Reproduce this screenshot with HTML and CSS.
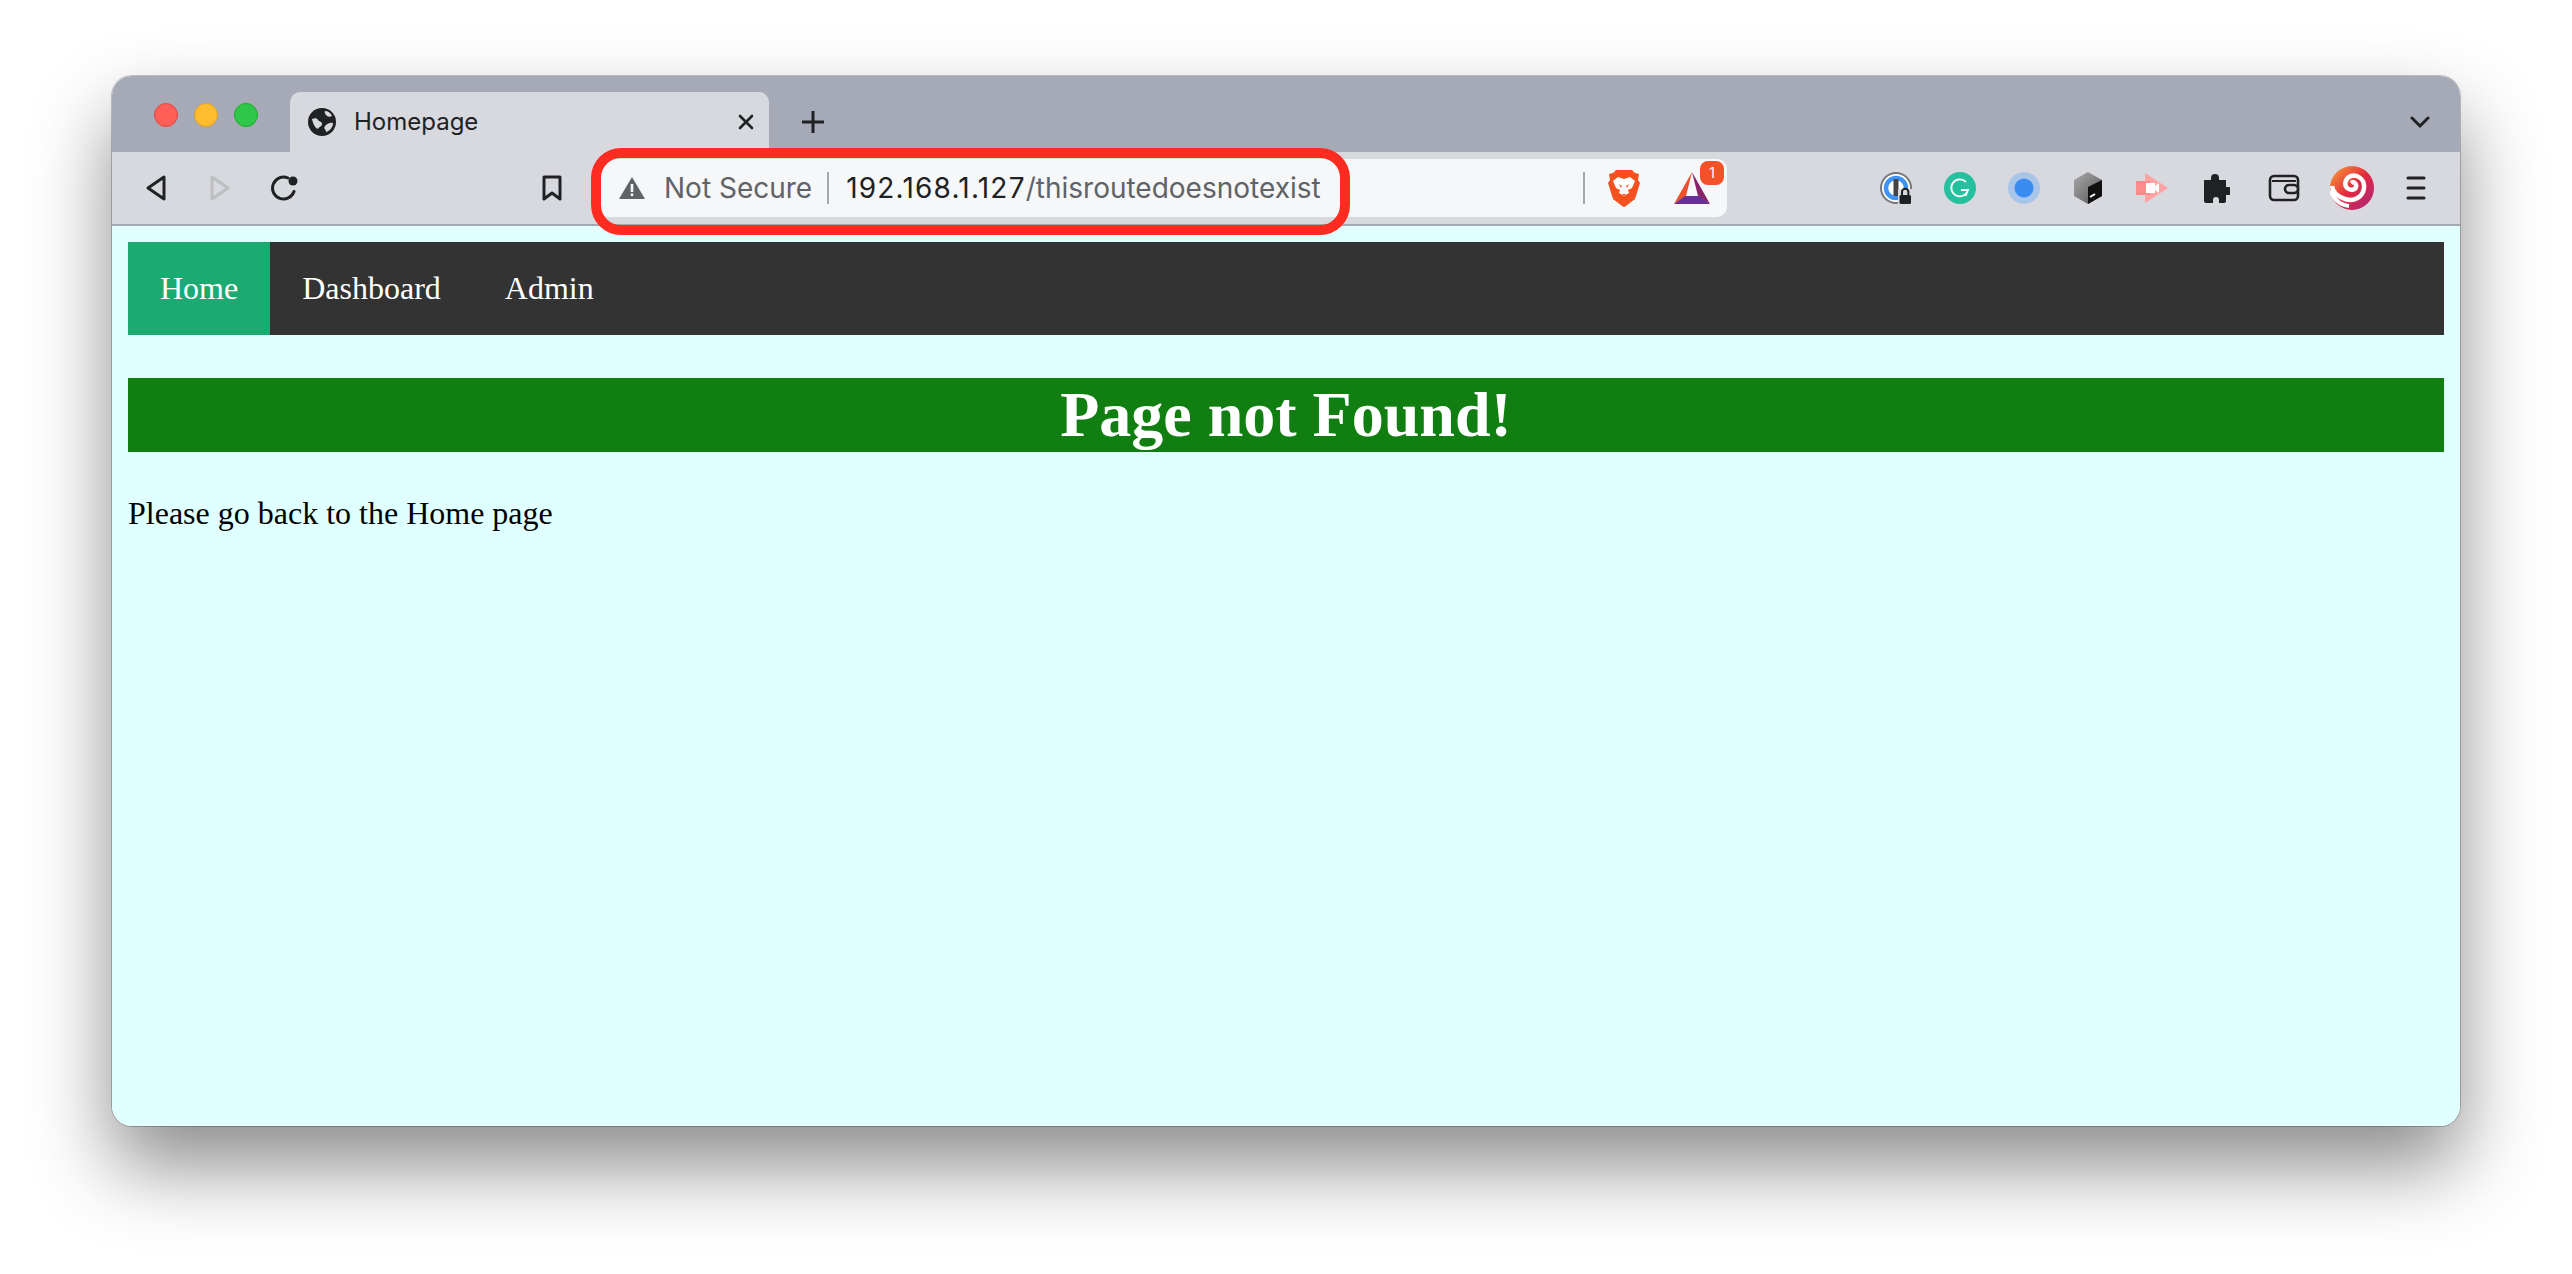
FILE: index.html
```html
<!DOCTYPE html>
<html lang="en">
<head>
    <meta charset="UTF-8">
    <title>Homepage</title>
    <link rel="stylesheet" href="styles.css">
</head>
<body>
    <div class="window">
        <!-- tab strip -->
        <div class="tabstrip">
            <div class="lights">
                <span class="light red"></span>
                <span class="light yellow"></span>
                <span class="light green"></span>
            </div>
            <div class="tab">
                <svg class="favicon" viewBox="0 0 28 28">
                    <circle cx="14" cy="14" r="14" fill="#202124"/>
                    <path d="M4 11c3-1 5-1 6 1s4 1 4 4-3 2-4 5c-3-1-5-5-6-10zM17 3c3 0 6 2 7 5-2 1-4 1-5 0s-3-3-2-5zM25 15c0 4-3 8-7 9 0-3-3-3-1-6 2-2 5-4 8-3z" fill="#d8d9df"/>
                </svg>
                <span class="tab-title">Homepage</span>
                <svg class="tab-close" viewBox="0 0 18 18">
                    <path d="M3 3l12 12M15 3L3 15" stroke="#202124" stroke-width="2.6" stroke-linecap="round"/>
                </svg>
            </div>
            <svg class="new-tab" viewBox="0 0 26 26">
                <path d="M13 2v22M2 13h22" stroke="#202124" stroke-width="3"/>
            </svg>
            <svg class="tab-menu" viewBox="0 0 20 14">
                <path d="M2 3l8 8 8-8" fill="none" stroke="#202124" stroke-width="3" stroke-linecap="round"/>
            </svg>
        </div>

        <!-- toolbar -->
        <div class="toolbar">
            <span class="tool first">
                <svg width="22" height="28" viewBox="0 0 22 28"><path d="M19 3L3 14l16 11z" fill="none" stroke="#202124" stroke-width="3" stroke-linejoin="round"/></svg>
            </span>
            <span class="tool">
                <svg width="22" height="28" viewBox="0 0 22 28"><path d="M3 3l16 11L3 25z" fill="none" stroke="#bdbec2" stroke-width="3" stroke-linejoin="round"/></svg>
            </span>
            <span class="tool">
                <svg width="28" height="28" viewBox="0 0 28 28"><path d="M24 17.500A11 11 0 1 1 18 4" fill="none" stroke="#202124" stroke-width="3" stroke-linecap="round"/><circle cx="23" cy="7" r="4.500" fill="#202124"/></svg>
            </span>
            <span class="tool bookmark">
                <svg width="22" height="28" viewBox="0 0 22 28"><path d="M3 3h16v22l-8-6-8 6z" fill="none" stroke="#202124" stroke-width="3" stroke-linejoin="round"/></svg>
            </span>

            <div class="address">
                <svg class="warn" viewBox="0 0 26 22">
                    <path d="M13 0l13 22H0z" fill="#5f6368"/>
                    <path d="M11.700 7h2.600v8h-2.600zM11.700 16.500h2.600v2.600h-2.600z" fill="#f6f7f9"/>
                </svg>
                <span class="not-secure">Not Secure</span>
                <span class="addr-sep"></span>
                <span class="url"><span class="host">192.168.1.127</span>/thisroutedoesnotexist</span>
                <span class="addr-sep end"></span>
                <svg class="brave" viewBox="0 0 34 38">
                    <path d="M9 1h16l3 3 4 1-1 6 2 3-5 16-9 7-2 1-2-1-9-7L1 14l2-3-1-6 4-1z" fill="#f6501f"/>
                    <path d="M11 8l6 2 6-2 5 4-3 7-4 2 1 3-5 3-5-3 1-3-4-2-3-7z" fill="#fff"/>
                    <path d="M12 15l3 2-1 2zM22 15l-3 2 1 2zM15 25h4l-2 2z" fill="#f6501f"/>
                </svg>
                <span class="bat">
                    <svg width="36" height="32" viewBox="0 0 36 32">
                        <path d="M18 0l18 32-12-8z" fill="#8a2368"/>
                        <path d="M18 0L0 32l12-8z" fill="#f0502a"/>
                        <path d="M0 32h36l-11-8H11z" fill="#66309a"/>
                    </svg>
                    <span class="badge">1</span>
                </span>
            </div>

            <span class="tool ext-first">
                <svg width="32" height="32" viewBox="0 0 32 32">
                    <circle cx="16" cy="16" r="15" fill="#fff" stroke="#777" stroke-width="2"/>
                    <circle cx="16" cy="16" r="10" fill="none" stroke="#3d94f6" stroke-width="4.500"/>
                    <rect x="13.500" y="7" width="5" height="17" fill="#444"/>
                    <rect x="18" y="17" width="14" height="15" fill="#d8d9df"/>
                    <path d="M22 23v-3a3.200 3.200 0 0 1 6.400 0v3" fill="none" stroke="#202124" stroke-width="2"/>
                    <rect x="19.500" y="23" width="11.500" height="9" rx="1.500" fill="#202124"/>
                </svg>
            </span>
            <span class="tool">
                <svg width="32" height="32" viewBox="0 0 32 32">
                    <circle cx="16" cy="16" r="16" fill="#25c19f"/>
                    <path d="M22 10a8.500 8.500 0 1 0 2 8h-7M24 18l-2.500 6" fill="none" stroke="#fff" stroke-width="1.800"/>
                </svg>
            </span>
            <span class="tool">
                <svg width="32" height="32" viewBox="0 0 32 32">
                    <circle cx="16" cy="16" r="16" fill="#a9c5ea"/>
                    <circle cx="16" cy="16" r="9.500" fill="#3a8cf0"/>
                </svg>
            </span>
            <span class="tool">
                <svg width="28" height="32" viewBox="0 0 28 32">
                    <defs><linearGradient id="boxGrey" x1="0" y1="0" x2="1" y2="1"><stop offset="0" stop-color="#aaa"/><stop offset="1" stop-color="#555"/></linearGradient></defs>
                    <path d="M14 0l14 8v16l-14 8-14-8V8z" fill="url(#boxGrey)"/>
                    <path d="M28 8v16l-14 8V15z" fill="#111"/>
                    <path d="M16 25l5-3" stroke="#fff" stroke-width="2"/>
                </svg>
            </span>
            <span class="tool">
                <svg width="32" height="30" viewBox="0 0 32 30">
                    <path d="M9 0l23 15L9 30z" fill="#fda3a3"/>
                    <rect x="0" y="8" width="14" height="14" fill="#fe8b8b"/>
                    <path d="M10 10h9v3l4-3v10l-4-3v3h-9z" fill="#fff"/>
                </svg>
            </span>
            <span class="tool">
                <svg width="28" height="30" viewBox="0 0 28 30">
                    <path d="M2 7h7V5a4 4 0 0 1 8 0v2h7v7h2a4 4 0 0 1 0 8h-2v6a2 2 0 0 1-2 2h-5v-3a3 3 0 0 0-6 0v3H4a2 2 0 0 1-2-2z" fill="#202124"/>
                </svg>
            </span>
            <span class="tool wallet">
                <svg width="32" height="28" viewBox="0 0 32 28">
                    <rect x="2" y="2" width="28" height="24" rx="4" fill="none" stroke="#202124" stroke-width="2.600"/>
                    <path d="M4 7h24" stroke="#202124" stroke-width="2"/>
                    <rect x="17" y="11" width="13" height="8" rx="4" fill="#d8d9df" stroke="#202124" stroke-width="2.600"/>
                </svg>
            </span>
            <span class="tool spiral">
                <svg width="44" height="44" viewBox="0 0 44 44">
                    <defs><linearGradient id="swirl" x1="0" y1="0" x2="1" y2="1"><stop offset="0" stop-color="#f9a535"/><stop offset=".5" stop-color="#e5293f"/><stop offset="1" stop-color="#a6257f"/></linearGradient></defs>
                    <circle cx="22" cy="22" r="22" fill="url(#swirl)"/>
                    <path d="M21 17c3-2 6 1 5 4s-6 4-9 1-2-10 4-12 14 3 13 12-10 14-19 11S3 26 2 20" fill="none" stroke="#fff" stroke-width="4.500"/>
                    <path d="M1 24c2 9 9 15 18 16" fill="none" stroke="#fff" stroke-width="4"/>
                </svg>
            </span>
            <span class="tool">
                <svg width="20" height="26" viewBox="0 0 20 26">
                    <path d="M2 3h16M2 13h16M2 23h16" stroke="#202124" stroke-width="3" stroke-linecap="round"/>
                </svg>
            </span>

            <!-- red annotation drawn over the address bar -->
            <div class="callout"></div>
        </div>

        <!-- page -->
        <div class="page">
            <div class="topnav">
                <a class="active" href="#">Home</a>
                <a href="#">Dashboard</a>
                <a href="#">Admin</a>
            </div>
            <h1>Page not Found!</h1>
            <p>Please go back to the Home page</p>
        </div>
    </div>
</body>
</html>
```

FILE: styles.css
```css
html, body {
    margin: 0;
    height: 100%;
    background-color: #fff;
    overflow: hidden;
}
body {
    padding: 76px 112px 0;
    box-sizing: border-box;
}
.window {
    position: relative;
    width: 2348px;
    height: 1050px;
    display: flex;
    flex-direction: column;
    border-radius: 20px;
    overflow: hidden;
    box-shadow: 0 0 0 1px rgba(0, 0, 0, 0.22), 0 40px 80px 0 rgba(0, 0, 0, 0.46);
}
.tabstrip {
    height: 76px;
    flex: none;
    display: flex;
    align-items: flex-end;
    background-color: #a6aab6;
    box-sizing: border-box;
}
.lights {
    align-self: flex-start;
    display: flex;
    gap: 16px;
    margin: 27px 0 0 42px;
}
.light {
    width: 24px;
    height: 24px;
    border-radius: 50%;
    box-sizing: border-box;
}
.red {
    background-color: #ff5f57;
    border: 1px solid #e0443e;
}
.yellow {
    background-color: #febc2e;
    border: 1px solid #dea123;
}
.green {
    background-color: #2fc74a;
    border: 1px solid #1aab29;
}
.tab {
    width: 479px;
    height: 60px;
    margin-left: 32px;
    display: flex;
    align-items: center;
    background-color: #d8d9df;
    border-radius: 10px 10px 0 0;
    box-sizing: border-box;
    padding-left: 18px;
}
.favicon {
    width: 28px;
    height: 28px;
}
.tab-title {
    margin: 0 0 2px 18px;
    font: 24px Inter, "Noto Sans", sans-serif;
    color: #202124;
}
.tab-close {
    width: 18px;
    height: 18px;
    margin-left: auto;
    margin-right: 14px;
}
.new-tab {
    width: 26px;
    height: 26px;
    margin: 0 0 17px 31px;
}
.tab-menu {
    width: 20px;
    height: 14px;
    margin: 0 30px 23px auto;
}
.toolbar {
    position: relative;
    height: 74px;
    flex: none;
    display: flex;
    align-items: center;
    background-color: #d8d9df;
    border-bottom: 2px solid #a5a9b5;
    box-sizing: border-box;
}
.tool {
    width: 64px;
    flex: none;
    display: flex;
    justify-content: center;
    align-items: center;
}
.tool.first {
    margin-left: 12px;
}
.tool.bookmark {
    margin-left: 204px;
}
.tool.ext-first {
    margin-left: 137px;
}
.tool.wallet, .tool.spiral {
    margin-left: 4px;
}
.address {
    width: 1129px;
    height: 58px;
    margin-left: 14px;
    flex: none;
    display: flex;
    align-items: center;
    background-color: #f6f7f9;
    border-radius: 10px;
    box-sizing: border-box;
    padding-left: 21px;
    font: 28px Inter, "Noto Sans", sans-serif;
    color: #5f6368;
}
.warn {
    width: 26px;
    height: 22px;
    flex: none;
}
.not-secure {
    margin-left: 19px;
}
.addr-sep {
    width: 2px;
    height: 32px;
    margin: 0 17px 0 15px;
    background-color: #a6a8ac;
    flex: none;
}
.addr-sep.end {
    margin: 0 22px 0 auto;
}
.host {
    color: #202124;
    letter-spacing: 1.2px;
}
.brave {
    width: 34px;
    height: 38px;
    flex: none;
}
.bat {
    position: relative;
    width: 36px;
    height: 32px;
    margin: 0 17px 0 33px;
    flex: none;
}
.badge {
    position: absolute;
    top: -11px;
    right: -14px;
    width: 24px;
    height: 24px;
    background-color: #f4502a;
    border-radius: 8px;
    color: #fff;
    font: 14px/24px Inter, sans-serif;
    text-align: center;
}
.callout {
    position: absolute;
    left: 479px;
    top: -4px;
    width: 759px;
    height: 87px;
    border: 10px solid #fe2b20;
    border-radius: 30px;
    box-sizing: border-box;
}
.page {
    flex: 1;
    padding: 16px;
    background-color: #e0ffff;
    font-family: "Liberation Serif", serif;
    font-size: 32px;
    color: #000;
}
.topnav {
    display: flex;
    background-color: #333;
}
.topnav a {
    padding: 28px 32px;
    font-size: 32px;
    line-height: 37px;
    color: #fff;
    text-decoration: none;
}
.topnav a.active {
    background-color: #1bab72;
}
h1 {
    margin: 43px 0;
    background-color: #107e10;
    color: #fff;
    font-size: 64px;
    line-height: 74px;
    text-align: center;
}
p {
    margin: 0;
    line-height: 37px;
}
```
